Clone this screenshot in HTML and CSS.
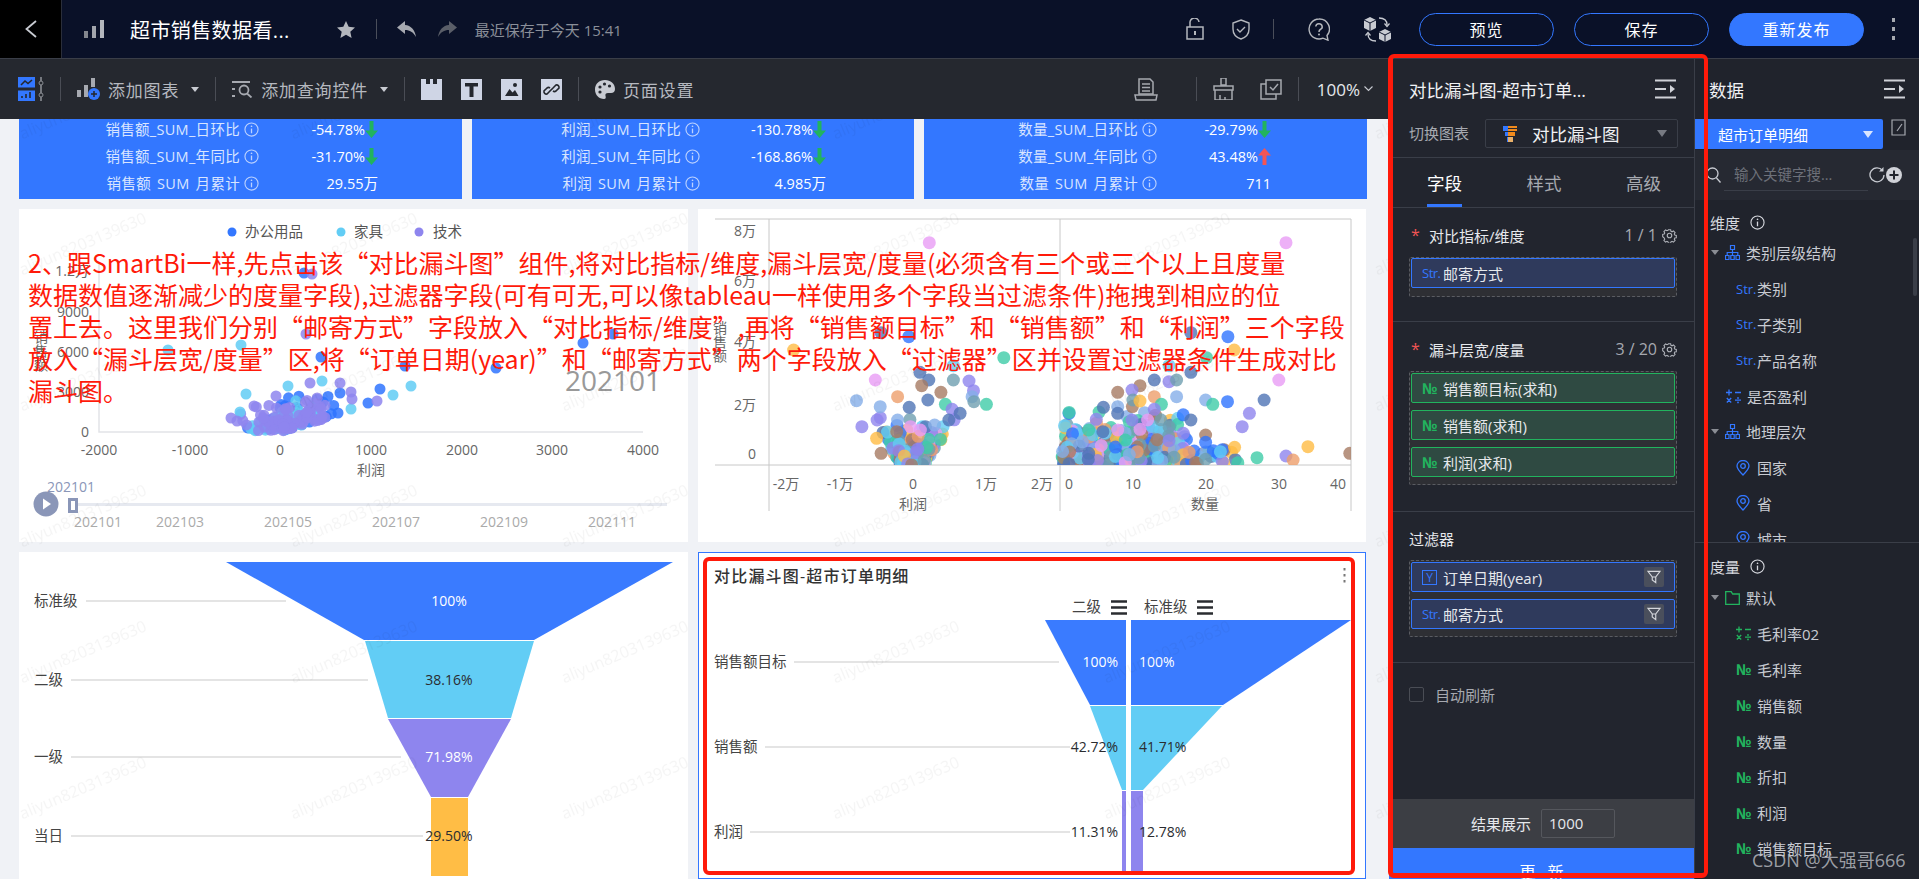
FILE: index.html
```html
<!doctype html>
<html>
<head>
    <title>超市销售数据看板</title>
    <meta charset="utf-8">
    <link rel="stylesheet" href="styles.css">
</head>
<body>
    <svg class="icon-defs" width="0" height="0">
        <symbol id="i-tree" viewBox="0 0 15 15"><path d="M5.5 .5h4v4h-4zM.5 10.500h3.500v4H.5zM5.800 10.500h3.400v4H5.800zM11 10.500h3.500v4H11zM7.500 4.500v6M2.200 10.500V7.500h10.600v3" fill="none" stroke="#3377ff" stroke-width="1.200"/></symbol>
        <symbol id="i-pin" viewBox="0 0 14 16"><path d="M7 15C3 11 1 8.500 1 6a6 5.500 0 0 1 12 0c0 2.500-2 5-6 9z" fill="none" stroke="#3377ff" stroke-width="1.300"/><circle cx="7" cy="6" r="2.300" fill="none" stroke="#3377ff" stroke-width="1.300"/></symbol>
        <symbol id="i-calc" viewBox="0 0 15 15"><path d="M0 3.500h6M3 .5v6M9 3.500h6M.8 9l4.400 4.500M5.200 9L.8 13.500M9 11.200h6" fill="none" stroke="currentColor" stroke-width="1.300"/><circle cx="12" cy="9" r=".9" fill="currentColor"/><circle cx="12" cy="13.400" r=".9" fill="currentColor"/></symbol>
        <symbol id="i-info" viewBox="0 0 16 16"><circle cx="8" cy="8" r="7" fill="none" stroke="currentColor" stroke-width="1.200"/><path d="M8 7v5" stroke="currentColor" stroke-width="1.400"/><circle cx="8" cy="4.500" r=".9" fill="currentColor"/></symbol>
        <symbol id="i-gear" viewBox="0 0 16 16"><path d="M6.600 1h2.800l.4 1.900 1.300.6 1.700-1 2 2-1 1.700.6 1.300 1.900.4v2.800l-1.900.4-.6 1.300 1 1.700-2 2-1.700-1-1.300.6-.4 1.900H6.600l-.4-1.900-1.300-.6-1.700 1-2-2 1-1.700-.6-1.300L-.3 9.400V6.600l1.900-.4.6-1.300-1-1.700 2-2 1.700 1 1.300-.6z" transform="translate(1 1) scale(.875)" fill="none" stroke="#b0b3ba" stroke-width="1.300"/><circle cx="8" cy="8" r="2.400" fill="none" stroke="#b0b3ba" stroke-width="1.200"/></symbol>
        <symbol id="i-collapse" viewBox="0 0 21 20"><path d="M0 1.500h21M0 10h11M0 18.500h21" stroke="#d0d2d8" stroke-width="2"/><path d="M15 6l5 4-5 4z" fill="#d0d2d8"/></symbol>
        <symbol id="i-filter" viewBox="0 0 16 16"><path d="M1 1.500h14L10 8v6.500L6 11.500V8z M6 8h4" fill="none" stroke="#d4d6dc" stroke-width="1.300"/></symbol>
        <symbol id="i-menu" viewBox="0 0 16 15"><path d="M0 1.500h16M0 7.500h16M0 13.500h16" stroke="#2a2c30" stroke-width="2.400"/></symbol>
        <symbol id="i-arrow-down" viewBox="0 0 13 17"><path d="M4.500 0h4v9.500H13L6.500 17 0 9.500h4.500z" fill="#22b35e"/></symbol>
        <symbol id="i-arrow-up" viewBox="0 0 13 17"><path d="M4.500 17h4V7.500H13L6.500 0 0 7.500h4.500z" fill="#f25555"/></symbol>
    </svg>

    <div class="page">
        <header class="top-bar">
            <div class="back-btn">
                <svg width="12" height="18" viewBox="0 0 12 18"><path d="M11 1L1.500 9 11 17" fill="none" stroke="#c8cbd2" stroke-width="1.800"/></svg>
            </div>
            <svg class="doc-icon" width="21" height="18" viewBox="0 0 21 18"><path d="M0 11h4v7H0z" fill="#84878e"/><path d="M8 6h4v12H8z" fill="#a2a5ac"/><path d="M16 0h4v18h-4z" fill="#b4b7bd"/></svg>
            <div class="doc-title">超市销售数据看...</div>
            <svg class="star-icon" width="18" height="17" viewBox="0 0 18 17"><path d="M9 0l2.700 5.800 6.300.7-4.700 4.200 1.300 6.300L9 13.800 3.400 17l1.300-6.300L0 6.500l6.300-.7z" fill="#b4b7bd"/></svg>
            <span class="top-sep"></span>
            <svg class="undo-icon" width="20" height="16" viewBox="0 0 20 16"><path d="M8 0L0 6.500 8 13V9c5 0 8 2 11 7-1-7-5-11.500-11-12z" fill="#a6a9b0"/></svg>
            <svg class="redo-icon" width="20" height="16" viewBox="0 0 20 16"><path d="M12 0l8 6.500-8 6.500V9C7 9 4 11 1 16c1-7 5-11.500 11-12z" fill="#5a5e68"/></svg>
            <div class="save-time">最近保存于今天 15:41</div>

            <div class="top-right">
                <svg width="18" height="22" viewBox="0 0 18 22"><path d="M1 9h16v12H1zM4 9V5a4.500 4.500 0 0 1 9-1" fill="none" stroke="#b4b7bd" stroke-width="1.500"/><path d="M8 13h2v4H8z" fill="#b4b7bd"/></svg>
                <svg class="shield-icon" width="18" height="21" viewBox="0 0 18 21"><path d="M9 1l8 3v6c0 5-3.500 8.500-8 10-4.500-1.500-8-5-8-10V4z" fill="none" stroke="#b4b7bd" stroke-width="1.400"/><path d="M5 10l3 3 5-5" fill="none" stroke="#b4b7bd" stroke-width="1.400"/></svg>
                <span class="top-sep sep-wide"></span>
                <svg width="22" height="23" viewBox="0 0 22 23"><path d="M11 1a10 10 0 1 0 4 19.200l5 2-1-4.700A10 10 0 0 0 11 1z" fill="none" stroke="#b4b7bd" stroke-width="1.400"/><path d="M7.800 8.500a3.200 3 0 1 1 4.500 3c-1 .6-1.300 1.200-1.300 2.500" fill="none" stroke="#b4b7bd" stroke-width="1.500"/><circle cx="11" cy="16.500" r="1" fill="#b4b7bd"/></svg>
                <svg class="cube-icon" width="27" height="25" viewBox="0 0 27 25"><path d="M0 3l6-3 6 3v8l-6 3-6-3z" fill="#c8cbd2"/><path d="M15 15l6-3 6 3v7l-6 3-6-3z" fill="#c8cbd2"/><path d="M0 3l6 3 6-3M6 6v8M15 15l6 3 6-3M21 18v7" fill="none" stroke="#0a1128" stroke-width="1"/><path d="M15 1c5 0 8 2.500 8 7M12 24c-5 0-8-2.500-8-7" fill="none" stroke="#c8cbd2" stroke-width="1.300"/><path d="M20.500 6.500l2.500 3 2.500-3M1.500 18.500l2.500-3 2.500 3" fill="none" stroke="#c8cbd2" stroke-width="1.200"/></svg>
                <button class="pill-btn">预览</button>
                <button class="pill-btn">保存</button>
                <button class="pill-btn pill-primary">重新发布</button>
                <div class="more-dots"><i></i><i></i><i></i></div>
            </div>
        </header>

        <div class="main">
            <div class="work-area">
                <div class="tool-bar">
                    <svg width="26" height="24" viewBox="0 0 26 24"><path d="M0 0h17v10.500H0z" fill="#3377ff"/><path d="M0 13.500h17V24H0z" fill="#3377ff"/><path d="M3 8l4-4 3 2.500L14 3" fill="none" stroke="#24272e" stroke-width="1.600"/><path d="M4 21v-2M8 21v-4M12 21v-6" stroke="#24272e" stroke-width="1.600"/><path d="M23 0v24" stroke="#8a8d94" stroke-width="1.600"/><circle cx="23" cy="6" r="2" fill="#24272e" stroke="#8a8d94"/><circle cx="23" cy="18" r="2" fill="#24272e" stroke="#8a8d94"/></svg>
                    <span class="tool-sep"></span>
                    <div class="tool-btn">
                        <svg width="23" height="22" viewBox="0 0 23 22"><path d="M0 12h4v7H0z" fill="#a6a9b0"/><path d="M7 7h4v12H7z" fill="#a6a9b0"/><path d="M14 0h4v9h-4z" fill="#a6a9b0"/><circle cx="17" cy="16" r="6" fill="#3377ff"/><path d="M14 16h6M17 13v6" stroke="#24272e" stroke-width="1.500"/></svg>
                        <span>添加图表</span>
                    </div>
                    <span class="caret"></span>
                    <span class="tool-sep"></span>
                    <div class="tool-btn">
                        <svg width="21" height="18" viewBox="0 0 21 18"><path d="M0 1h18v2H0zM0 8h3v2H0zM0 15h3v2H0z" fill="#a6a9b0"/><circle cx="12" cy="10" r="4.500" fill="none" stroke="#a6a9b0" stroke-width="1.800"/><path d="M15 13.500l4.500 4" stroke="#a6a9b0" stroke-width="1.800"/></svg>
                        <span>添加查询控件</span>
                    </div>
                    <span class="caret"></span>
                    <span class="tool-sep"></span>
                    <div class="tool-squares">
                        <svg width="21" height="21" viewBox="0 0 21 21"><path d="M0 0h5v5h4V0h3v5h4V0h5v21H0z" fill="#cfd5e5"/></svg>
                        <svg width="21" height="21" viewBox="0 0 21 21"><path d="M0 0h21v21H0z" fill="#cfd5e5"/><path d="M4 4h13v3.500h-4.500V18h-4V7.500H4z" fill="#24272e"/></svg>
                        <svg width="21" height="21" viewBox="0 0 21 21"><path d="M0 0h21v21H0z" fill="#cfd5e5"/><path d="M4 17l4.500-7 3 3.500 2.500-2.500 3.500 6z" fill="#24272e"/><circle cx="14" cy="6" r="2" fill="#24272e"/></svg>
                        <svg width="21" height="21" viewBox="0 0 21 21"><path d="M0 0h21v21H0z" fill="#cfd5e5"/><path d="M9 12l-3 3a2.500 2.500 0 0 1-3-3l3-3a2.500 2.500 0 0 1 3 0M12 9l3-3a2.500 2.500 0 0 1 3 3l-3 3a2.500 2.500 0 0 1-3 0M8 13l5-5" fill="none" stroke="#24272e" stroke-width="1.600"/></svg>
                    </div>
                    <span class="tool-sep"></span>
                    <div class="tool-btn">
                        <svg width="20" height="19" viewBox="0 0 20 19"><path d="M10 0C4 0 0 4 0 9.500S4 19 9 19c2 0 2-1.500 1.500-3-.5-2 .5-3 2.500-3h3c2.500 0 4-1.500 4-4C20 3.500 15.500 0 10 0z" fill="#c8cbd2"/><circle cx="5" cy="7" r="1.600" fill="#24272e"/><circle cx="9.500" cy="4" r="1.600" fill="#24272e"/><circle cx="14.500" cy="6" r="1.600" fill="#24272e"/><circle cx="5" cy="12" r="1.600" fill="#24272e"/></svg>
                        <span>页面设置</span>
                    </div>
                    <div class="tool-right">
                        <svg class="report-icon" width="24" height="23" viewBox="0 0 24 23"><path d="M5 1h11l3 3v12H5z" fill="none" stroke="#a6a9b0" stroke-width="1.500"/><path d="M8 6h8M8 9.500h8M8 13h8" stroke="#a6a9b0" stroke-width="1.500"/><path d="M1 17h22l-1 5H2z" fill="none" stroke="#a6a9b0" stroke-width="1.500"/></svg>
                        <span class="tool-sep"></span>
                        <svg width="21" height="22" viewBox="0 0 21 22"><path d="M8 0h5v7H8zM1 8h19v4H1zM2 12h17v10H2z" fill="none" stroke="#a6a9b0" stroke-width="1.500"/><path d="M7 22v-5M12 22v-3" stroke="#a6a9b0" stroke-width="1.500"/></svg>
                        <svg class="copy-icon" width="22" height="21" viewBox="0 0 22 21"><path d="M6 1h15v14H6z" fill="none" stroke="#a6a9b0" stroke-width="1.500"/><path d="M6 5H1v15h15v-5" fill="none" stroke="#a6a9b0" stroke-width="1.500"/><path d="M10 8l3 3 5-6" fill="none" stroke="#a6a9b0" stroke-width="1.500"/></svg>
                        <span class="tool-sep"></span>
                        <span class="zoom-value">100%</span>
                        <svg width="9" height="6" viewBox="0 0 9 6"><path d="M.5.5l4 4 4-4" fill="none" stroke="#c8cbd2" stroke-width="1.100"/></svg>
                    </div>
                </div>

                <div class="canvas">
                    <div class="kpi-row">
                        <div class="kpi-card kpi-sales">
                            <span class="kpi-label">销售额_SUM_日环比</span><svg class="kpi-info"><use href="#i-info"/></svg><span class="kpi-value">-54.78%<svg class="kpi-arrow"><use href="#i-arrow-down"/></svg></span>
                            <span class="kpi-label">销售额_SUM_年同比</span><svg class="kpi-info"><use href="#i-info"/></svg><span class="kpi-value">-31.70%<svg class="kpi-arrow"><use href="#i-arrow-down"/></svg></span>
                            <span class="kpi-label">销售额 SUM 月累计</span><svg class="kpi-info"><use href="#i-info"/></svg><span class="kpi-value">29.55万</span>
                        </div>
                        <div class="kpi-card kpi-profit">
                            <span class="kpi-label">利润_SUM_日环比</span><svg class="kpi-info"><use href="#i-info"/></svg><span class="kpi-value">-130.78%<svg class="kpi-arrow"><use href="#i-arrow-down"/></svg></span>
                            <span class="kpi-label">利润_SUM_年同比</span><svg class="kpi-info"><use href="#i-info"/></svg><span class="kpi-value">-168.86%<svg class="kpi-arrow"><use href="#i-arrow-down"/></svg></span>
                            <span class="kpi-label">利润 SUM 月累计</span><svg class="kpi-info"><use href="#i-info"/></svg><span class="kpi-value">4.985万</span>
                        </div>
                        <div class="kpi-card kpi-count">
                            <span class="kpi-label">数量_SUM_日环比</span><svg class="kpi-info"><use href="#i-info"/></svg><span class="kpi-value">-29.79%<svg class="kpi-arrow"><use href="#i-arrow-down"/></svg></span>
                            <span class="kpi-label">数量_SUM_年同比</span><svg class="kpi-info"><use href="#i-info"/></svg><span class="kpi-value">43.48%<svg class="kpi-arrow"><use href="#i-arrow-up"/></svg></span>
                            <span class="kpi-label">数量 SUM 月累计</span><svg class="kpi-info"><use href="#i-info"/></svg><span class="kpi-value">711</span>
                        </div>
                    </div>

                    <div class="chart-grid">
                        <div class="chart-card">
                            <svg class="chart-svg" viewBox="19 209 669 333">
                                <g class="legend">
                                    <circle cx="232" cy="232" r="4.500" fill="#3377ff"/><text x="245" y="237">办公用品</text>
                                    <circle cx="341" cy="232" r="4.500" fill="#62cdf5"/><text x="354" y="237">家具</text>
                                    <circle cx="419" cy="232" r="4.500" fill="#8e85ee"/><text x="433" y="237">技术</text>
                                </g>
                                <text class="play-title" x="565" y="391">202101</text>
                                <path class="axis" d="M99 262V432H643"/>
                                <g class="tick" text-anchor="end">
                                    <text x="89" y="276">1.2万</text><text x="89" y="317">9000</text><text x="89" y="357">6000</text><text x="89" y="397">3000</text><text x="89" y="437">0</text>
                                </g>
                                <g class="tick" text-anchor="middle">
                                    <text x="99" y="455">-2000</text><text x="190" y="455">-1000</text><text x="280" y="455">0</text><text x="371" y="455">1000</text><text x="462" y="455">2000</text><text x="552" y="455">3000</text><text x="643" y="455">4000</text>
                                    <text x="371" y="475">利润</text>
                                    <text x="41" y="342">销</text><text x="41" y="356">售</text><text x="41" y="370">额</text>
                                </g>
                                <g id="dots-sales"></g>
                                <text class="play-label" x="47" y="492">202101</text>
                                <circle cx="46" cy="504" r="12.500" fill="#8a96b8"/>
                                <path d="M43 498.500l8 5.500-8 5.500z" fill="#fff"/>
                                <path d="M78 503h589v3H78z" fill="#e6e9f0"/>
                                <path d="M68 498h10v15H68z" fill="#8a96b8"/>
                                <path d="M71 501h4v9h-4z" fill="#fff"/>
                                <g class="play-tick" text-anchor="middle">
                                    <text x="98" y="527">202101</text><text x="180" y="527">202103</text><text x="288" y="527">202105</text><text x="396" y="527">202107</text><text x="504" y="527">202109</text><text x="612" y="527">202111</text>
                                </g>
                            </svg>
                        </div>

                        <div class="chart-card">
                            <svg class="chart-svg" viewBox="698 209 668 333">
                                <clipPath id="plot-clip"><path d="M769 219h582v246H769z"/></clipPath>
                                <path class="grid-line" d="M715 219H1351M715 465H1351M769 219V511M1060 219V511M1351 219V511"/>
                                <g class="tick" text-anchor="end">
                                    <text x="756" y="236">8万</text><text x="756" y="286">6万</text><text x="756" y="347">4万</text><text x="756" y="410">2万</text><text x="756" y="459">0</text>
                                </g>
                                <g class="tick" text-anchor="middle">
                                    <text x="786" y="489">-2万</text><text x="840" y="489">-1万</text><text x="913" y="489">0</text><text x="986" y="489">1万</text><text x="1042" y="489">2万</text>
                                    <text x="1069" y="489">0</text><text x="1133" y="489">10</text><text x="1206" y="489">20</text><text x="1279" y="489">30</text><text x="1338" y="489">40</text>
                                    <text x="913" y="509">利润</text><text x="1205" y="509">数量</text>
                                    <text x="720" y="333">销</text><text x="720" y="347">售</text><text x="720" y="361">额</text>
                                </g>
                                <g id="dots-facet" clip-path="url(#plot-clip)"></g>
                            </svg>
                        </div>

                        <div class="chart-card">
                            <svg class="chart-svg" viewBox="19 552 669 327">
                                <path class="lead-line" d="M86 601H286M71 680H368M71 757H401M71 836H423"/>
                                <polygon points="226,562 673,562 534,640 364,640" fill="#3a7bff"/>
                                <polygon points="365,641 534,641 511,718 388,718" fill="#62cdf5"/>
                                <polygon points="388,719 511,719 468,797 431,797" fill="#8e85ee"/>
                                <polygon points="431,798 468,798 468,876 431,876" fill="#ffbd45"/>
                                <g class="lead-text">
                                    <text x="34" y="606">标准级</text><text x="34" y="685">二级</text><text x="34" y="762">一级</text><text x="34" y="841">当日</text>
                                </g>
                                <g class="pct" text-anchor="middle">
                                    <text class="pct-light" x="449" y="606">100%</text><text x="449" y="685">38.16%</text><text class="pct-light" x="449" y="762">71.98%</text><text x="449" y="841">29.50%</text>
                                </g>
                            </svg>
                        </div>

                        <div class="chart-card chart-active">
                            <svg class="chart-svg" viewBox="698 552 668 327">
                                <text class="chart-title" x="714" y="582">对比漏斗图-超市订单明细</text>
                                <path d="M1344.500 568v2.500M1344.500 574v2.500M1344.500 580v2.500" stroke="#777" stroke-width="2"/>
                                <g class="lead-text">
                                    <text x="1072" y="612">二级</text><text x="1144" y="612">标准级</text>
                                </g>
                                <use href="#i-menu" x="1111" y="600" width="16" height="15"/>
                                <use href="#i-menu" x="1197" y="600" width="16" height="15"/>
                                <path class="lead-line" d="M794 662H1059M765 747H1070M750 832H1070"/>
                                <polygon points="1045,620 1126,620 1126,705 1090,705" fill="#3a7bff"/>
                                <polygon points="1090,706 1126,706 1126,790 1122,790" fill="#62cdf5"/>
                                <path d="M1122 791h4v84h-4z" fill="#8e85ee"/>
                                <polygon points="1131,620 1351,620 1223,705 1131,705" fill="#3a7bff"/>
                                <polygon points="1131,706 1222,706 1143,790 1131,790" fill="#62cdf5"/>
                                <path d="M1131 791h12v84h-12z" fill="#8e85ee"/>
                                <g class="lead-text">
                                    <text x="714" y="667">销售额目标</text><text x="714" y="752">销售额</text><text x="714" y="837">利润</text>
                                </g>
                                <g class="pct" text-anchor="end">
                                    <text class="pct-light" x="1118" y="667">100%</text><text x="1118" y="752">42.72%</text><text x="1118" y="837">11.31%</text>
                                </g>
                                <g class="pct">
                                    <text class="pct-light" x="1139" y="667">100%</text><text x="1139" y="752">41.71%</text><text x="1139" y="837">12.78%</text>
                                </g>
                            </svg>
                        </div>
                    </div>

                    <svg class="watermark" width="100%" height="100%">
                        <pattern id="wm" x="-50" y="-66" width="271" height="136" patternUnits="userSpaceOnUse">
                            <text x="135" y="60" text-anchor="middle" transform="rotate(-23 135 60)">aliyun8203139630</text>
                        </pattern>
                        <rect width="100%" height="100%" fill="url(#wm)"/>
                    </svg>
                </div>
            </div>

            <aside class="config-panel">
                <div class="panel-head">
                    <span class="panel-title">对比漏斗图-超市订单...</span>
                    <svg width="21" height="20"><use href="#i-collapse"/></svg>
                </div>
                <div class="switch-row">
                    <span class="switch-label">切换图表</span>
                    <div class="switch-select">
                        <svg width="14" height="16" viewBox="0 0 14 16"><path d="M0 0h5v5H0z" fill="#3377ff"/><path d="M5 0h9v2H5zM5 3h9v2H5z" fill="#f08a1d"/><path d="M2 6h3v4H2z" fill="#3377ff"/><path d="M5 6h7v4H5z" fill="#f08a1d"/><path d="M4 11h1v5H4z" fill="#3377ff"/><path d="M5 11h5v5H5z" fill="#e8b06a"/></svg>
                        <span>对比漏斗图</span>
                        <i class="select-caret"></i>
                    </div>
                </div>
                <div class="tabs">
                    <span class="tab tab-active">字段</span>
                    <span class="tab">样式</span>
                    <span class="tab">高级</span>
                </div>

                <section class="field-block block-dim">
                    <div class="field-head">
                        <i class="required">*</i><span class="field-name">对比指标/维度</span>
                        <span class="field-count">1 / 1</span><svg class="gear" width="15" height="15"><use href="#i-gear"/></svg>
                    </div>
                    <div class="drop-zone">
                        <div class="chip"><i class="tag-str">Str.</i>邮寄方式</div>
                    </div>
                </section>

                <section class="field-block block-measure">
                    <div class="field-head">
                        <i class="required">*</i><span class="field-name">漏斗层宽/度量</span>
                        <span class="field-count">3 / 20</span><svg class="gear" width="15" height="15"><use href="#i-gear"/></svg>
                    </div>
                    <div class="drop-zone">
                        <div class="chip chip-green"><i class="tag-num">№</i>销售额目标(求和)</div>
                        <div class="chip chip-green"><i class="tag-num">№</i>销售额(求和)</div>
                        <div class="chip chip-green"><i class="tag-num">№</i>利润(求和)</div>
                    </div>
                </section>

                <section class="field-block block-filter">
                    <div class="field-head">
                        <span class="filter-name">过滤器</span>
                    </div>
                    <div class="drop-zone">
                        <div class="chip"><i class="tag-year">Y</i>订单日期(year)<span class="filter-btn"><svg width="14" height="14"><use href="#i-filter"/></svg></span></div>
                        <div class="chip"><i class="tag-str">Str.</i>邮寄方式<span class="filter-btn"><svg width="14" height="14"><use href="#i-filter"/></svg></span></div>
                    </div>
                </section>

                <div class="auto-row">
                    <i class="check-box"></i><span>自动刷新</span>
                </div>

                <div class="result-row">
                    <span>结果展示</span>
                    <div class="result-input">1000</div>
                </div>
                <div class="update-btn">更 新</div>
            </aside>

            <aside class="data-panel">
                <div class="data-head">
                    <span class="panel-title">数据</span>
                    <svg width="21" height="20"><use href="#i-collapse"/></svg>
                </div>
                <div class="source-row">
                    <div class="source-select">超市订单明细<i class="source-caret"></i></div>
                    <svg width="15" height="17" viewBox="0 0 15 17"><path d="M1 1h13v15H1zM11 5l-5 7" fill="none" stroke="#a6a9b0" stroke-width="1.200"/></svg>
                </div>
                <div class="search-row">
                    <svg width="15" height="16" viewBox="0 0 15 16"><circle cx="6.500" cy="6.500" r="5.500" fill="none" stroke="#c8cbd2" stroke-width="1.300"/><path d="M10.500 11l4 4.500" stroke="#c8cbd2" stroke-width="1.300"/></svg>
                    <div class="search-input">输入关键字搜...</div>
                    <svg width="17" height="16" viewBox="0 0 17 16"><path d="M13.500 3.500A7 7 0 1 0 15 8" fill="none" stroke="#c8cbd2" stroke-width="1.300"/><path d="M14.500 0v4.500H10z" fill="#c8cbd2"/></svg>
                    <svg width="16" height="16" viewBox="0 0 16 16"><circle cx="8" cy="8" r="8" fill="#d0d2d8"/><path d="M3.500 8h9M8 3.500v9" stroke="#20232c" stroke-width="2"/></svg>
                </div>

                <div class="tree tree-dim">
                    <div class="tree-head">维度<svg width="15" height="15"><use href="#i-info"/></svg></div>
                    <div class="tree-row"><i class="tree-caret"></i><svg class="tree-icon" width="15" height="15"><use href="#i-tree"/></svg>类别层级结构</div>
                    <div class="tree-row row-leaf"><i class="tag-str">Str.</i>类别</div>
                    <div class="tree-row row-leaf"><i class="tag-str">Str.</i>子类别</div>
                    <div class="tree-row row-leaf"><i class="tag-str">Str.</i>产品名称</div>
                    <div class="tree-row row-plain"><svg class="tree-icon calc-blue" width="15" height="15"><use href="#i-calc"/></svg>是否盈利</div>
                    <div class="tree-row"><i class="tree-caret"></i><svg class="tree-icon" width="15" height="15"><use href="#i-tree"/></svg>地理层次</div>
                    <div class="tree-row row-leaf"><svg class="leaf-icon" width="14" height="16"><use href="#i-pin"/></svg>国家</div>
                    <div class="tree-row row-leaf"><svg class="leaf-icon" width="14" height="16"><use href="#i-pin"/></svg>省</div>
                    <div class="tree-row row-leaf"><svg class="leaf-icon" width="14" height="16"><use href="#i-pin"/></svg>城市</div>
                </div>

                <div class="tree tree-measure">
                    <div class="tree-head">度量<svg width="15" height="15"><use href="#i-info"/></svg></div>
                    <div class="tree-row"><i class="tree-caret"></i><svg class="tree-icon" width="15" height="14" viewBox="0 0 15 14"><path d="M.7.7h5.500l1.500 2.300h6.600v10.300H.7z" fill="none" stroke="#22b35e" stroke-width="1.300"/></svg>默认</div>
                    <div class="tree-row row-leaf"><svg class="leaf-icon calc-green" width="15" height="15"><use href="#i-calc"/></svg>毛利率02</div>
                    <div class="tree-row row-leaf"><i class="tag-num">№</i>毛利率</div>
                    <div class="tree-row row-leaf"><i class="tag-num">№</i>销售额</div>
                    <div class="tree-row row-leaf"><i class="tag-num">№</i>数量</div>
                    <div class="tree-row row-leaf"><i class="tag-num">№</i>折扣</div>
                    <div class="tree-row row-leaf"><i class="tag-num">№</i>利润</div>
                    <div class="tree-row row-leaf"><i class="tag-num">№</i>销售额目标</div>
                </div>
                <i class="tree-scroll"></i>
            </aside>
        </div>

        <!-- annotation layer drawn over the screenshot -->
        <div class="note">2、跟SmartBi一样,先点击该“对比漏斗图”组件,将对比指标/维度,漏斗层宽/度量(必须含有三个或三个以上且度量<br>数据数值逐渐减少的度量字段),过滤器字段(可有可无,可以像tableau一样使用多个字段当过滤条件)拖拽到相应的位<br>置上去。这里我们分别“邮寄方式”字段放入“对比指标/维度”,再将“销售额目标”和“销售额”和“利润”三个字段<br>放入“漏斗层宽/度量”区,将“订单日期(year)”和“邮寄方式”两个字段放入“过滤器”区并设置过滤器条件生成对比<br>漏斗图。</div>
        <div class="red-frame frame-panel"></div>
        <div class="red-frame frame-chart"></div>
        <div class="csdn-mark">CSDN @大强哥666</div>
    </div>
    <script src="charts.js"></script>
</body>
</html>
```

FILE: styles.css
```css
* {
    box-sizing: border-box;
}
html, body {
    margin: 0;
    padding: 0;
    height: 100%;
    overflow: hidden;
}
body {
    font-family: "Open Sans", "Noto Sans CJK SC", sans-serif;
    font-size: 14px;
    background-color: #f0f2f6;
}
i {
    font-style: normal;
}
.icon-defs {
    position: absolute;
}
.page {
    position: relative;
    width: 1919px;
    height: 879px;
    overflow: hidden;
    display: flex;
    flex-direction: column;
}

/* top bar */
.top-bar {
    height: 59px;
    flex: none;
    display: flex;
    align-items: center;
    padding-right: 24px;
    background-color: #0a1128;
    border-bottom: 1px solid #3a3e48;
}
.back-btn {
    width: 62px;
    height: 58px;
    display: flex;
    align-items: center;
    justify-content: center;
    background-color: #000;
    border-right: 1px solid #2a2e3a;
}
.doc-icon {
    margin-left: 22px;
}
.doc-title {
    margin-left: 25px;
    font-size: 20px;
    color: #fff;
    letter-spacing: .4px;
}
.star-icon {
    margin-left: 47px;
}
.top-sep {
    width: 1px;
    height: 20px;
    margin-left: 21px;
    background-color: #4a4e5a;
}
.undo-icon {
    margin-left: 20px;
}
.redo-icon {
    margin-left: 20px;
}
.save-time {
    margin-left: 18px;
    color: #8a8f99;
    font-size: 15px;
}
.top-right {
    margin-left: auto;
    display: flex;
    align-items: center;
}
.shield-icon {
    margin-left: 28px;
}
.sep-wide {
    margin-left: 23px;
    margin-right: 34px;
}
.cube-icon {
    margin-left: 34px;
    margin-right: 28px;
}
.pill-btn {
    width: 135px;
    height: 33px;
    margin-right: 20px;
    padding: 0;
    font-family: inherit;
    font-size: 16px;
    letter-spacing: 1px;
    color: #fff;
    background: none;
    border: 1px solid #3377ff;
    border-radius: 17px;
}
.pill-primary {
    background-color: #3377ff;
}
.more-dots {
    display: flex;
    flex-direction: column;
    gap: 5px;
    margin-left: 8px;
}
.more-dots i {
    width: 3px;
    height: 4px;
    background-color: #a6a9b0;
}

/* tool bar + canvas */
.main {
    flex: 1;
    min-height: 0;
    display: flex;
}
.work-area {
    width: 1389px;
    flex: none;
    display: flex;
    flex-direction: column;
}
.tool-bar {
    height: 60px;
    flex: none;
    display: flex;
    align-items: center;
    padding: 0 16px 0 18px;
    color: #b5b8bf;
    background-color: #25282f;
}
.tool-sep {
    width: 1px;
    height: 24px;
    margin: 0 16px;
    background-color: #4a4d55;
}
.tool-btn {
    display: flex;
    align-items: center;
    gap: 8px;
    font-size: 17px;
    letter-spacing: .8px;
}
.caret {
    width: 0;
    height: 0;
    margin-left: 12px;
    border: 4px solid transparent;
    border-top: 5px solid #c8cbd2;
    border-bottom: 0;
}
.tool-squares {
    display: flex;
    gap: 19px;
}
.tool-right {
    margin-left: auto;
    display: flex;
    align-items: center;
}
.report-icon {
    margin-right: 22px;
}
.copy-icon {
    margin-left: 26px;
}
.zoom-value {
    margin-left: 2px;
    margin-right: 4px;
    font-size: 17px;
    color: #e6e8ec;
}
.canvas {
    position: relative;
    flex: 1;
    min-height: 0;
    overflow: hidden;
    padding-left: 19px;
}
.kpi-row {
    display: grid;
    grid-template-columns: 443px 442px 443px;
    gap: 10px;
}
.kpi-card {
    height: 80px;
    display: grid;
    grid-template-rows: 20px 27px 27px;
    align-items: end;
    color: #d9e5ff;
    background-color: #3377ff;
}
.kpi-sales {
    grid-template-columns: 221px 22px 116px;
}
.kpi-profit {
    grid-template-columns: 209px 22px 123px;
}
.kpi-count {
    grid-template-columns: 214px 22px 111px;
}
.kpi-label {
    text-align: right;
    line-height: 19px;
    font-size: 14.500px;
    letter-spacing: .3px;
    word-spacing: 2px;
}
.kpi-info {
    width: 15px;
    height: 15px;
    margin-left: 4px;
    margin-bottom: 2px;
    color: #bcd2ff;
}
.kpi-value {
    display: block;
    text-align: right;
    line-height: 19px;
    font-size: 14.500px;
    color: #fff;
}
.kpi-arrow {
    width: 13px;
    height: 17px;
    vertical-align: -3px;
}
.chart-grid {
    display: grid;
    grid-template-columns: 669px 668px;
    grid-template-rows: 333px 327px;
    gap: 10px;
    margin-top: 10px;
}
.chart-card {
    position: relative;
    background-color: #fff;
}
.chart-active {
    outline: 1px solid #3377ff;
    outline-offset: -1px;
}
.chart-svg {
    display: block;
    width: 100%;
    height: 100%;
    font-family: "Open Sans", "Noto Sans CJK SC", sans-serif;
}
.legend text {
    font-size: 14.500px;
    fill: #555;
}
.axis {
    fill: none;
    stroke: #e2e4e8;
    stroke-width: 1.500;
}
.grid-line {
    fill: none;
    stroke: #c8c8c8;
    stroke-width: 1;
}
.tick text {
    font-size: 14px;
    fill: #666;
}
.play-title {
    font-size: 28px;
    fill: #999;
}
.play-label {
    font-size: 14px;
    fill: #8a96b8;
}
.play-tick text {
    font-size: 14px;
    fill: #aaa;
}
.lead-line {
    fill: none;
    stroke: #dcdcdc;
    stroke-width: 1.500;
}
.lead-text text {
    font-size: 14.500px;
    fill: #444;
}
.pct text {
    font-size: 14px;
    fill: #2a2c30;
}
.pct text.pct-light {
    fill: #fff;
}
.chart-title {
    font-size: 16px;
    font-weight: 500;
    fill: #333;
    letter-spacing: 1.200px;
}
.watermark {
    position: absolute;
    left: 0;
    top: 0;
    pointer-events: none;
}
.watermark text {
    font-size: 16px;
    fill: rgba(0, 0, 0, .04);
}

/* chart config panel */
.config-panel {
    width: 306px;
    flex: none;
    display: flex;
    flex-direction: column;
    color: #d6d8de;
    background-color: #22252e;
    border-right: 1px solid #3a3e48;
}
.panel-head {
    height: 60px;
    flex: none;
    display: flex;
    align-items: center;
    justify-content: space-between;
    padding: 0 18px 0 20px;
}
.panel-title {
    font-size: 17.500px;
    color: #f0f1f4;
}
.switch-row {
    height: 39px;
    flex: none;
    display: flex;
    align-items: flex-start;
    padding: 0 16px 0 20px;
    border-bottom: 1px solid #3a3e48;
}
.switch-label {
    width: 76px;
    line-height: 29px;
    font-size: 15px;
    color: #a6a9b0;
}
.switch-select {
    flex: 1;
    height: 29px;
    display: flex;
    align-items: center;
    gap: 15px;
    padding: 0 10px 0 17px;
    font-size: 17.500px;
    color: #f0f1f4;
    border: 1px solid #3a3e48;
    border-radius: 2px;
}
.select-caret {
    width: 0;
    height: 0;
    margin-left: auto;
    border: 5px solid transparent;
    border-top: 7px solid #777a82;
    border-bottom: 0;
}
.tabs {
    height: 50px;
    flex: none;
    display: flex;
    padding-left: 38px;
    border-bottom: 1px solid #3a3e48;
}
.tab {
    position: relative;
    width: 99.500px;
    flex: none;
    line-height: 50px;
    font-size: 17.500px;
    color: #a6a9b0;
}
.tab:last-child {
    width: 70px;
}
.tab-active {
    color: #fff;
}
.tab-active::after {
    content: "";
    position: absolute;
    left: 0;
    bottom: 0;
    width: 35px;
    height: 3px;
    background-color: #3377ff;
}
.field-block {
    flex: none;
    padding: 16px 17px 0 20px;
    border-bottom: 1px solid #3a3e48;
}
.block-dim {
    height: 114px;
}
.block-measure {
    height: 190px;
}
.block-filter {
    height: 151px;
    padding-top: 15px;
}
.field-head {
    height: 22px;
    margin-bottom: 11px;
    display: flex;
    align-items: center;
    font-size: 15px;
}
.required {
    width: 20px;
    padding-left: 2px;
    font-size: 16px;
    color: #f25555;
}
.field-name {
    color: #e6e8ec;
}
.filter-name {
    color: #e6e8ec;
}
.field-count {
    margin-left: auto;
    margin-right: 5px;
    font-size: 16px;
    color: #a6a9b0;
}
.drop-zone {
    display: flex;
    flex-direction: column;
    gap: 7px;
    padding: 1px 1px 7px;
    background-color: #2e2f34;
    border: 1px dashed #5a5c62;
    border-radius: 2px;
}
.block-dim .drop-zone {
    padding-top: 0;
    padding-bottom: 8px;
}
.chip {
    height: 30px;
    display: flex;
    align-items: center;
    padding-left: 10px;
    font-size: 15px;
    color: #e6e8ec;
    background-color: #2f3a5c;
    border: 1px solid #3377ff;
    border-radius: 2px;
}
.chip-green {
    background-color: #2f4a42;
    border-color: #22b35e;
}
.tag-str {
    width: 21px;
    flex: none;
    font-size: 13px;
    letter-spacing: -.5px;
    color: #3377ff;
}
.tag-num {
    width: 21px;
    flex: none;
    font-size: 15px;
    font-weight: 700;
    color: #22b35e;
}
.tag-year {
    width: 15px;
    height: 15px;
    flex: none;
    margin-right: 6px;
    line-height: 14px;
    text-align: center;
    font-size: 12px;
    color: #3377ff;
    border: 1px solid #3377ff;
}
.filter-btn {
    width: 20px;
    height: 20px;
    margin-left: auto;
    margin-right: 10px;
    display: flex;
    align-items: center;
    justify-content: center;
    background-color: #4a4f5c;
    border-radius: 2px;
}
.auto-row {
    flex: 1;
    display: flex;
    align-items: flex-start;
    gap: 11px;
    padding: 21px 0 0 20px;
    font-size: 15px;
    color: #a6a9b0;
}
.check-box {
    width: 15px;
    height: 15px;
    margin-top: 3px;
    border: 1px solid #4a4d55;
    border-radius: 2px;
}
.result-row {
    height: 49px;
    flex: none;
    display: flex;
    align-items: center;
    gap: 10px;
    padding-left: 82px;
    font-size: 15px;
    color: #e6e8ec;
    background-color: #3c3e44;
}
.result-input {
    width: 74px;
    height: 29px;
    padding-left: 7px;
    line-height: 27px;
    border: 1px solid #55575d;
    border-radius: 2px;
}
.update-btn {
    height: 31px;
    flex: none;
    overflow: hidden;
    text-align: center;
    line-height: 48px;
    font-size: 16px;
    word-spacing: 8px;
    color: #fff;
    background-color: #3377ff;
}

/* data panel */
.data-panel {
    position: relative;
    flex: 1;
    display: flex;
    flex-direction: column;
    color: #c8cbd2;
    background-color: #20232c;
}
.data-head {
    height: 60px;
    flex: none;
    display: flex;
    align-items: center;
    justify-content: space-between;
    padding: 0 14px;
}
.source-row {
    height: 31px;
    flex: none;
    display: flex;
    align-items: flex-start;
    gap: 8px;
}
.source-select {
    width: 188px;
    height: 30px;
    display: flex;
    align-items: center;
    padding-left: 23px;
    font-size: 15px;
    color: #fff;
    background-color: #3377ff;
    border-radius: 0 2px 2px 0;
}
.source-caret {
    width: 0;
    height: 0;
    margin-left: auto;
    margin-right: 10px;
    border: 5px solid transparent;
    border-top: 7px solid #d9e5ff;
    border-bottom: 0;
}
.search-row {
    height: 50px;
    flex: none;
    display: flex;
    align-items: center;
    padding-left: 11px;
    background-color: #262932;
}
.search-input {
    width: 144px;
    height: 32px;
    margin-left: 3px;
    margin-right: 1px;
    padding-left: 10px;
    line-height: 31px;
    font-size: 14.500px;
    color: #6d7079;
    border-bottom: 1px solid #3a3e48;
}
.tree {
    flex: none;
    overflow: hidden;
}
.tree-dim {
    height: 343px;
    border-bottom: 1px solid #3a3e48;
}
.tree-measure {
    flex: 1;
}
.tree-head {
    height: 35px;
    display: flex;
    align-items: center;
    gap: 10px;
    padding: 9px 0 0 15px;
    font-size: 15px;
    color: #d6d8de;
}
.tree-measure .tree-head {
    height: 37px;
}
.tree-row {
    height: 35.800px;
    display: flex;
    align-items: center;
    padding-left: 16px;
    font-size: 15px;
}
.tree-caret {
    width: 0;
    height: 0;
    border: 4.500px solid transparent;
    border-top: 5px solid #8a8d94;
    border-bottom: 0;
}
.tree-icon {
    margin-left: 6px;
    margin-right: 6px;
}
.row-plain {
    padding-left: 31px;
}
.row-leaf {
    padding-left: 41px;
}
.row-leaf .tag-str {
    letter-spacing: 0;
}
.leaf-icon {
    margin-right: 7px;
}
.calc-blue {
    margin-left: 0;
    color: #3377ff;
}
.calc-green {
    margin-right: 6px;
    color: #22b35e;
}
.tree-scroll {
    position: absolute;
    right: 2px;
    top: 179px;
    width: 4px;
    height: 58px;
    background-color: #3a3e48;
    border-radius: 2px;
}

/* overlays */
.note {
    position: absolute;
    left: 28px;
    top: 246px;
    white-space: nowrap;
    font-family: "Noto Sans CJK SC", sans-serif;
    font-size: 25px;
    line-height: 32px;
    color: #ff1a0a;
}
.red-frame {
    position: absolute;
    border: 4px solid #ff1a0a;
    border-radius: 6px;
}
.frame-panel {
    left: 1388px;
    top: 54px;
    width: 320px;
    height: 824px;
    border-left-width: 5px;
    border-bottom-width: 5px;
}
.frame-chart {
    left: 703px;
    top: 557px;
    width: 652px;
    height: 318px;
}
.csdn-mark {
    position: absolute;
    left: 1752px;
    top: 846px;
    font-size: 18px;
    color: rgba(190, 192, 198, .8);
}
```

FILE: charts.js
```js
// small seeded generator so the scatter clouds stay the same on every load
var seed = 20210101;
function rnd() {
    seed = (seed * 1664525 + 1013904223) % 4294967296;
    return seed / 4294967296;
}

var C = {
    blue: '#2f74ff', cyan: '#62cdf5', purple: '#8e85ee', steel: '#4f74b5',
    brown: '#a67a63', orange: '#ee9f6c', yellow: '#ffbb44', teal: '#3fcca8',
    pink: '#e89cf5', sky: '#85aee8', gray: '#6f9fb0'
};
var palette = Object.keys(C);

function addDot(parent, x, y, r, color, opacity) {
    var c = document.createElementNS('http://www.w3.org/2000/svg', 'circle');
    c.setAttribute('cx', x.toFixed(1));
    c.setAttribute('cy', y.toFixed(1));
    c.setAttribute('r', r);
    c.setAttribute('fill', color);
    c.setAttribute('opacity', opacity);
    parent.appendChild(c);
}

function pick() {
    return C[palette[Math.floor(rnd() * palette.length)]];
}

// chart 1: 销售额 against 利润, one colour per category
var salesGroup = document.getElementById('dots-sales');
var salesColors = [C.blue, C.cyan, C.purple];
var salesCounts = [50, 50, 70];
salesColors.forEach(function (color, i) {
    for (var n = 0; n < salesCounts[i]; n++) {
        var x = 283 + (rnd() - 0.42) * 115 * rnd();
        var y = 431 - rnd() * rnd() * 36 - Math.max(0, x - 283) * 0.3;
        addDot(salesGroup, x, y, 5.5, color, 0.85);
    }
});
[
    [304, 273, 'blue'], [312, 274, 'purple'], [583, 343, 'blue'], [613, 334, 'blue'],
    [306, 334, 'purple'], [168, 350, 'cyan'], [241, 345, 'cyan'], [321, 357, 'blue'],
    [405, 366, 'blue'], [496, 368, 'blue'], [322, 381, 'cyan'], [288, 386, 'cyan'],
    [246, 394, 'cyan'], [393, 395, 'cyan'], [411, 386, 'cyan'], [380, 389, 'blue'],
    [368, 403, 'blue'], [340, 393, 'blue'], [240, 412, 'cyan'], [351, 409, 'cyan'],
    [310, 383, 'purple'], [340, 383, 'purple'], [351, 392, 'purple'], [352, 399, 'purple'],
    [377, 401, 'purple'], [254, 406, 'purple'], [276, 396, 'purple'], [231, 418, 'purple'],
    [237, 421, 'purple'], [338, 413, 'blue']
].forEach(function (d) {
    addDot(salesGroup, d[0], d[1], 5.5, C[d[2]], 0.85);
});

// chart 2: two facets, 利润 on the left and 数量 on the right
var facetGroup = document.getElementById('dots-facet');
var i, x, y;
for (i = 0; i < 170; i++) {
    y = 465 - rnd() * rnd() * 52;
    x = 913 + (rnd() - 0.5) * (24 + (465 - y) * 1.3);
    addDot(facetGroup, x, y, 6.5, pick(), 0.8);
}
for (i = 0; i < 300; i++) {
    y = 465 - rnd() * rnd() * 60;
    x = 1062 + rnd() * 125;
    addDot(facetGroup, x, y, 6.5, pick(), 0.8);
}
for (i = 0; i < 22; i++) {
    y = 465 - rnd() * 16;
    x = 1185 + rnd() * 55;
    addDot(facetGroup, x, y, 6.5, pick(), 0.8);
}
[
    // left facet
    [536, 128, 'pink'], [428, 398, 'steel'], [490, 410, 'blue'], [232, 450, 'yellow'],
    [703, 473, 'teal'], [590, 497, 'cyan'], [515, 517, 'steel'], [535, 540, 'steel'],
    [590, 540, 'gray'], [625, 543, 'purple'], [519, 557, 'brown'], [562, 577, 'brown'],
    [635, 572, 'purple'], [632, 590, 'sky'], [636, 605, 'gray'], [664, 613, 'teal'],
    [415, 540, 'pink'], [465, 590, 'orange'], [373, 602, 'sky'], [426, 620, 'sky'],
    [533, 600, 'steel'], [572, 613, 'teal'], [491, 622, 'steel'], [587, 628, 'purple'],
    [605, 640, 'steel'], [419, 660, 'purple'], [385, 680, 'purple'], [418, 715, 'yellow'],
    [428, 760, 'brown'], [494, 680, 'pink'], [516, 690, 'pink'], [548, 675, 'sky'],
    [465, 660, 'sky'], [463, 695, 'brown'], [580, 660, 'steel'],
    // right facet
    [1335, 128, 'pink'], [1122, 398, 'steel'], [1205, 410, 'blue'], [1219, 450, 'yellow'],
    [1157, 473, 'teal'], [1073, 497, 'cyan'], [1122, 517, 'steel'], [1040, 540, 'steel'],
    [1073, 545, 'purple'], [1090, 540, 'gray'], [1319, 540, 'pink'], [958, 577, 'brown'],
    [1008, 557, 'brown'], [990, 570, 'purple'], [992, 600, 'gray'], [1008, 603, 'yellow'],
    [1040, 590, 'orange'], [1090, 590, 'sky'], [1155, 600, 'sky'], [1171, 613, 'teal'],
    [1204, 605, 'blue'], [1286, 600, 'steel'], [1056, 613, 'teal'], [1040, 628, 'purple'],
    [926, 622, 'steel'], [958, 620, 'sky'], [958, 640, 'steel'], [1253, 640, 'purple'],
    [1122, 660, 'steel'], [1237, 680, 'purple'], [893, 690, 'teal'], [910, 658, 'purple'],
    [1105, 700, 'purple'], [1155, 705, 'brown'], [1384, 740, 'yellow'], [1155, 727, 'blue'],
    [1220, 742, 'yellow'], [1188, 755, 'cyan'], [1335, 768, 'purple'], [1351, 780, 'orange'],
    [1478, 760, 'brown'], [1270, 773, 'teal'], [1155, 778, 'gray'], [1008, 688, 'pink'],
    [1073, 680, 'gray'], [1073, 722, 'purple'], [975, 720, 'teal'], [990, 660, 'purple'],
    [1025, 660, 'pink'], [925, 695, 'steel'], [958, 690, 'pink']
].forEach(function (d) {
    // points were read off the screenshot in a 2.24x / 3x crop
    addDot(facetGroup, 690 + d[0] / 2.24, 200 + d[1] / 3, 6.5, C[d[2]], 0.8);
});
```
